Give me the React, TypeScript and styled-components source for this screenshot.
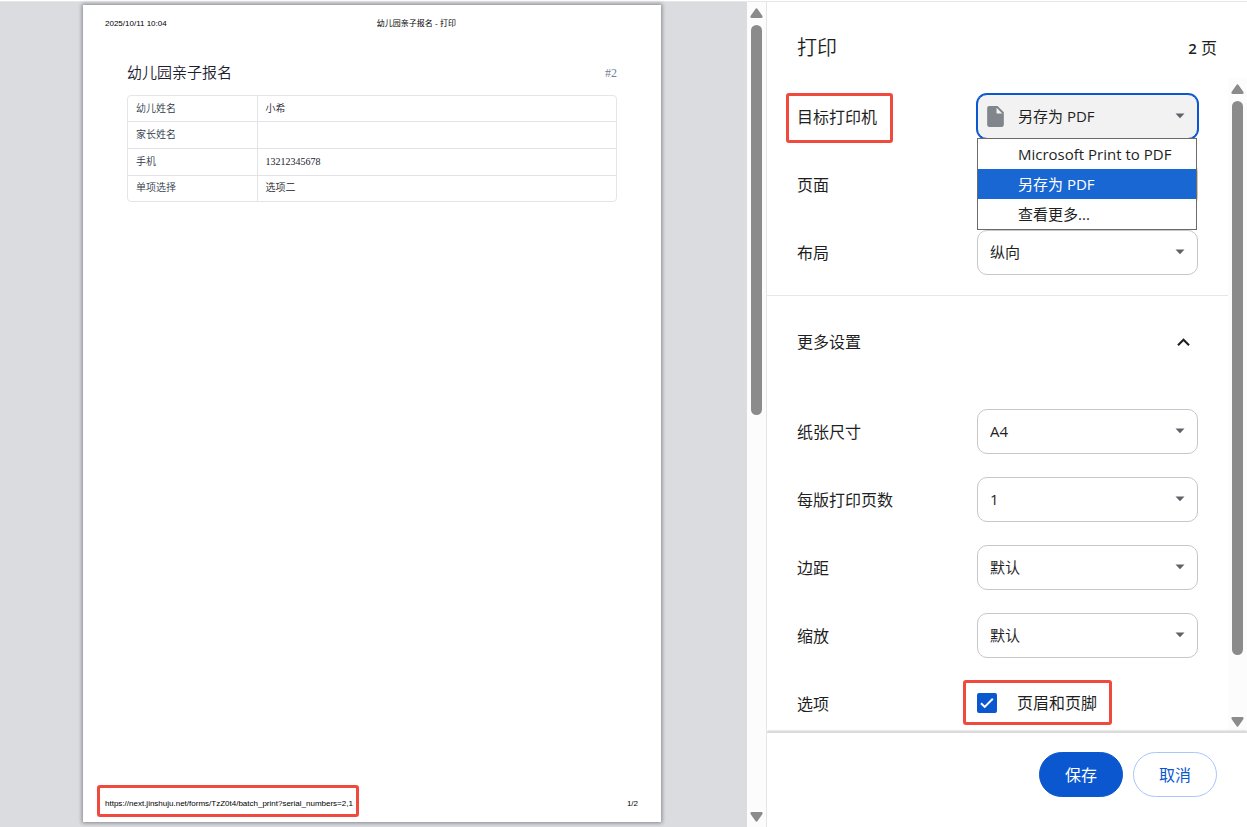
import React from "react";
import styled, { createGlobalStyle, css } from "styled-components";
import { MdExpandLess, MdInsertDriveFile } from "react-icons/md";

const GlobalStyle = createGlobalStyle`
  *, *::before, *::after { box-sizing: border-box; }
  body {
    margin: 0;
    background: #fff;
    color: #1f1f1f;
    font-family: "Open Sans", "Noto Sans CJK SC", sans-serif;
    font-size: 16px;
    font-weight: 370;
    line-height: 24px;
  }
  button, input, select { font: inherit; color: inherit; }
`;

const blue = "#0b57d0";

const Window = styled.div`
  display: flex;
  height: 100vh;
  padding-top: 1px;
`;

/* Preview side */

const Preview = styled.main`
  flex: 1;
  min-width: 0;
  display: flex;
  border-top: 1px solid #e6e8e8;
  background: #dadce0;
  padding: 3px 86px 5px 83px;
`;

const Paper = styled.article`
  flex: 1;
  min-width: 0;
  display: flex;
  flex-direction: column;
  justify-content: space-between;
  background: #fff;
  box-shadow: 0 0 4px 1px #85878c;
  padding: 13px 23px 12px 22px;
`;

const PageHeader = styled.header`
  display: grid;
  grid-template-columns: 51% auto;
  font: 8px/12px "Liberation Sans", "Noto Sans CJK SC", sans-serif;
  color: #000;
`;

const PageFooter = styled(PageHeader).attrs({ as: "footer" })`
  grid-template-columns: 1fr auto;
`;

const Sheet = styled.section`
  flex: 1;
  padding: 29px 21px 0 22px;
  font-family: "Liberation Serif", "Noto Sans CJK SC", serif;
`;

const SheetTitle = styled.div`
  display: flex;
  justify-content: space-between;
  align-items: center;
  height: 28px;
  font-size: 12px;
  color: #718096;
  margin-bottom: 8px;
`;

const SheetName = styled.h1`
  margin: 0;
  font-size: 15px;
  font-weight: 350;
  line-height: 28px;
  color: #1a202c;
`;

const TableFrame = styled.div`
  border: 1px solid #e5e5e9;
  border-radius: 4px;
  overflow: hidden;
`;

const Table = styled.table`
  width: 100%;
  height: 105px;
  border-collapse: collapse;
  font-size: 10px;
  line-height: 16px;
  th, td {
    padding: 0 8px;
    text-align: left;
    font-weight: 350;
    color: #1a202c;
  }
  th { width: 129px; border-right: 1px solid #e2e3e8; color: #2d3748; }
  tr + tr > * { border-top: 1px solid #e2e3e8; }
`;

/* Red frame that marks something on the page, laid over it */
const Marked = styled.span<{ $outset: string }>`
  position: relative;
  display: inline-flex;
  align-items: center;
  &::after {
    content: "";
    position: absolute;
    inset: ${(p) => p.$outset};
    border: 3px solid #f04a3e;
    border-radius: 3px;
    pointer-events: none;
  }
`;

/* Scroll bars */

const Track = styled.div`
  flex: none;
  width: 19px;
  display: flex;
  flex-direction: column;
  align-items: center;
  gap: 7px;
  padding: 6px 0 5px;
  background: #fcfcfc;
  svg { display: block; flex: none; }
`;

const Rail = styled.div`
  flex: 1;
  width: 11px;
  display: flex;
  flex-direction: column;
`;

const Thumb = styled.div<{ $share: number }>`
  height: ${(p) => p.$share}%;
  border-radius: 6px;
  background: #8b8b8b;
`;

const ScrollBar = ({ share }: { share: number }) => (
  <Track>
    <svg width="13" height="10" viewBox="0 0 13 10">
      <path d="M5.3 1.2Q6.5-.6 7.7 1.2L12.3 7.8Q13.2 9.8 11.3 10H1.7Q-.2 9.8.7 7.8z" fill="#8b8b8b" />
    </svg>
    <Rail>
      <Thumb $share={share} />
    </Rail>
    <svg width="13" height="10" viewBox="0 0 13 10">
      <path d="M5.3 8.8Q6.5 10.6 7.7 8.8L12.3 2.2Q13.2.2 11.3 0H1.7Q-.2.2.7 2.2z" fill="#8b8b8b" />
    </svg>
  </Track>
);

const PreviewScroll = styled.div`
  flex: none;
  display: flex;
  border-top: 1px solid #e6e8e8;
  border-right: 1px solid #e4e5e8;
`;

/* Settings side */

const Panel = styled.aside`
  flex: none;
  width: 480px;
  display: flex;
  flex-direction: column;
  border-top: 1px solid #e6e8e8;
`;

const PanelHeader = styled.header`
  flex: none;
  display: flex;
  align-items: center;
  justify-content: space-between;
  height: 76px;
  padding: 16px 30px 0;
`;

const PanelTitle = styled.h2`
  margin: 0;
  font-size: 20px;
  font-weight: 350;
  line-height: 28px;
`;

const SheetCount = styled.span`
  b { font-weight: 600; font-size: 15px; }
`;

const PanelBody = styled.div`
  flex: 1;
  min-height: 0;
  display: flex;
`;

const Settings = styled.form`
  flex: 1;
  min-width: 0;
  overflow-y: auto;
  scrollbar-width: none;
  padding-top: 4px;
`;

const Group = styled.div`
  padding-bottom: 9px;
`;

const Row = styled.div`
  display: flex;
  align-items: center;
  height: 68px;
  padding: 0 30px;
`;

const RowLabel = styled.label`
  flex: none;
  width: 180px;
  padding-top: 2px;
`;

const Field = styled.div`
  position: relative;
  flex: 1;
  min-width: 0;
  display: flex;
  align-items: center;
`;

const Select = styled.select<{ $open?: boolean }>`
  appearance: none;
  width: 100%;
  height: 45px;
  padding: 0 36px 0 12px;
  border: 1px solid #c7c7c7;
  border-radius: 10px;
  background: #fff;
  font-size: 15px;
  outline: none;
  ${(p) =>
    p.$open &&
    css`
      padding-left: 40px;
      border-color: ${blue};
      box-shadow: 0 0 0 1px ${blue};
      background: #f2f2f2;
    `}
`;

const Arrow = styled.svg`
  position: absolute;
  right: 12px;
  top: 19px;
  pointer-events: none;
`;

const FileIcon = styled(MdInsertDriveFile)`
  position: absolute;
  left: 6px;
  pointer-events: none;
`;

const Popup = styled.ul`
  position: absolute;
  z-index: 1;
  top: 44px;
  left: 0;
  right: 1px;
  margin: 0;
  padding: 0;
  list-style: none;
  border: 1px solid #6b6b6b;
  background: #fff;
  font-size: 15px;
  line-height: 30px;
`;

const PopupItem = styled.li<{ $active?: boolean }>`
  padding-left: 40px;
  background: ${(p) => (p.$active ? "#1967d2" : "#fff")};
  color: ${(p) => (p.$active ? "#fff" : "#1f1f1f")};
`;

const MoreButton = styled.button`
  display: flex;
  align-items: center;
  justify-content: space-between;
  width: 100%;
  height: 93px;
  margin-bottom: 9px;
  padding: 0 32px 0 30px;
  border: 0;
  border-top: 1px solid #e4e7eb;
  background: none;
`;

const CheckLabel = styled.label`
  position: relative;
  display: flex;
  align-items: center;
  gap: 20px;
  svg { position: absolute; left: 0; pointer-events: none; }
`;

const CheckBox = styled.input`
  appearance: none;
  width: 20px;
  height: 20px;
  margin: 0;
  border: 2px solid ${blue};
  border-radius: 2px;
  &:checked { background: ${blue}; }
`;

const PanelFooter = styled.footer`
  flex: none;
  display: flex;
  justify-content: flex-end;
  gap: 10px;
  padding: 19px 30px 30px;
  background: #fff;
  border-top: 1px solid #dcdcdc;
  box-shadow: 0 -1px 2px #c8c8c8;
  clip-path: inset(-6px 0 0 0);
  z-index: 1;
`;

const Button = styled.button<{ $primary?: boolean }>`
  width: 84px;
  height: 45px;
  padding: 0;
  border: 1px solid ${(p) => (p.$primary ? blue : "#a8c7fa")};
  border-radius: 23px;
  background: ${(p) => (p.$primary ? blue : "#fff")};
  color: ${(p) => (p.$primary ? "#fff" : blue)};
  font-weight: ${(p) => (p.$primary ? 400 : 370)};
`;

const DropArrow = () => (
  <Arrow width="11" height="6" viewBox="0 0 11 6">
    <path d="M.5.5h9L5 5.2z" fill="#5f6368" />
  </Arrow>
);

const SelectRow = ({ id, label, value }: { id: string; label: string; value: string }) => (
  <Row>
    <RowLabel htmlFor={id}>{label}</RowLabel>
    <Field>
      <Select id={id} defaultValue={value}>
        <option>{value}</option>
      </Select>
      <DropArrow />
    </Field>
  </Row>
);

const answers = [
  ["幼儿姓名", "小希"],
  ["家长姓名", ""],
  ["手机", "13212345678"],
  ["单项选择", "选项二"],
];

const printers = ["Microsoft Print to PDF", "另存为 PDF", "查看更多..."];

export default function App() {
  return (
    <>
      <GlobalStyle />
      <Window>
        <Preview>
          <Paper>
            <PageHeader>
              <span>2025/10/11 10:04</span>
              <span>幼儿园亲子报名 - 打印</span>
            </PageHeader>
            <Sheet>
              <SheetTitle>
                <SheetName>幼儿园亲子报名</SheetName>
                <span>#2</span>
              </SheetTitle>
              <TableFrame>
                <Table>
                  <tbody>
                    {answers.map(([name, value]) => (
                      <tr key={name}>
                        <th scope="row">{name}</th>
                        <td>{value}</td>
                      </tr>
                    ))}
                  </tbody>
                </Table>
              </TableFrame>
            </Sheet>
            <PageFooter>
              <span>
                <Marked $outset="-13px -6px -7px -8px">
                  https://next.jinshuju.net/forms/TzZ0t4/batch_print?serial_numbers=2,1
                </Marked>
              </span>
              <span>1/2</span>
            </PageFooter>
          </Paper>
        </Preview>
        <PreviewScroll>
          <ScrollBar share={50} />
        </PreviewScroll>
        <Panel>
          <PanelHeader>
            <PanelTitle>打印</PanelTitle>
            <SheetCount>
              <b>2</b> 页
            </SheetCount>
          </PanelHeader>
          <PanelBody>
            <Settings>
              <Group>
                <Row>
                  <RowLabel htmlFor="printer">
                    <Marked $outset="-12px -16px -14px -11px">目标打印机</Marked>
                  </RowLabel>
                  <Field>
                    <Select id="printer" $open defaultValue={printers[1]}>
                      {printers.map((p) => (
                        <option key={p}>{p}</option>
                      ))}
                    </Select>
                    <FileIcon size={25} color="#80868b" />
                    <DropArrow />
                    <Popup role="listbox" aria-label="目标打印机">
                      {printers.map((p) => (
                        <PopupItem key={p} role="option" aria-selected={p === printers[1]} $active={p === printers[1]}>
                          {p}
                        </PopupItem>
                      ))}
                    </Popup>
                  </Field>
                </Row>
                <SelectRow id="pages" label="页面" value="全部" />
                <SelectRow id="layout" label="布局" value="纵向" />
              </Group>
              <MoreButton type="button" aria-expanded="true">
                更多设置
                <MdExpandLess size={25} />
              </MoreButton>
              <SelectRow id="paper" label="纸张尺寸" value="A4" />
              <SelectRow id="per-sheet" label="每版打印页数" value="1" />
              <SelectRow id="margins" label="边距" value="默认" />
              <SelectRow id="scale" label="缩放" value="默认" />
              <Row>
                <RowLabel as="span">选项</RowLabel>
                <Marked $outset="-11px -15px -10px -14px">
                  <CheckLabel>
                    <CheckBox type="checkbox" defaultChecked />
                    <svg width="20" height="20" viewBox="0 0 20 20">
                      <path d="M4 10.2l3.7 3.7L15.8 5.8" fill="none" stroke="#fff" strokeWidth="2" />
                    </svg>
                    页眉和页脚
                  </CheckLabel>
                </Marked>
              </Row>
            </Settings>
            <ScrollBar share={91} />
          </PanelBody>
          <PanelFooter>
            <Button type="button" $primary>保存</Button>
            <Button type="button">取消</Button>
          </PanelFooter>
        </Panel>
      </Window>
    </>
  );
}
